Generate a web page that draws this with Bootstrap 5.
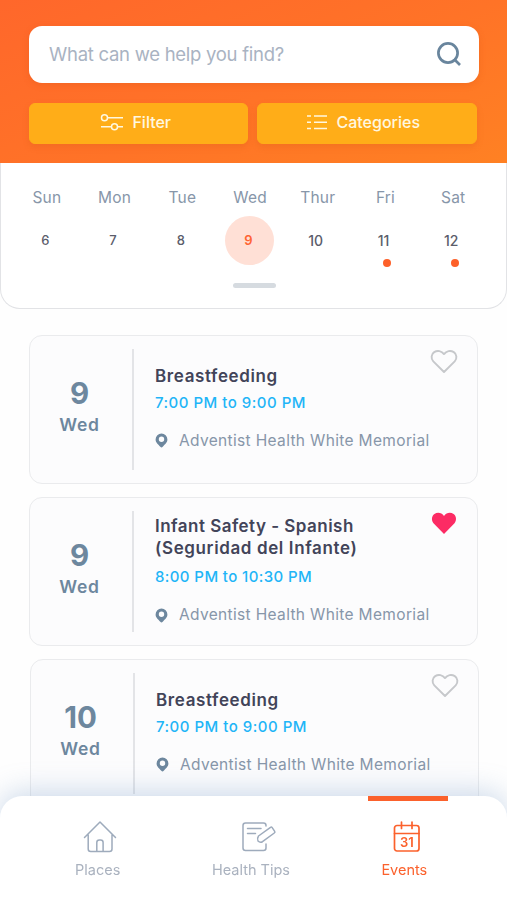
<!DOCTYPE html>
<html lang="en">
<head>
<meta charset="utf-8">
<meta name="viewport" content="width=device-width, initial-scale=1">
<title>Events</title>
<link href="https://cdn.jsdelivr.net/npm/bootstrap@5.3.0/dist/css/bootstrap.min.css" rel="stylesheet">
<style>
  body { font-family: Inter, "Open Sans", sans-serif; background: #fefefe; color: #45475b; height: 900px; overflow: hidden; }
  svg { display: block; flex: none; }
  .app-top { height: 163px; z-index: 1; padding: 26px 28px 0 29px; background: linear-gradient(158deg, #ff672b 0%, #ff7327 55%, #ff8123 100%); }
  .search-box { height: 57px; border-radius: 13px; padding: 0 17px 2px 20px; box-shadow: 0 2px 6px rgba(210,80,20,.25); }
  .search-text { font-size: 18.5px; line-height: 24px; color: #a9b3c2; letter-spacing: -.27px; }
  .top-actions { margin-top: 20px; gap: 9px; padding-right: 2px; }
  .btn-top { --bs-btn-color: #fff8e0; --bs-btn-bg: #ffad18; --bs-btn-border-color: #ffad18; --bs-btn-hover-bg: #f9a30c; --bs-btn-hover-color: #fff; height: 41px; border-radius: 6px; font-size: 16px; font-weight: 500; box-shadow: 0 3px 6px rgba(200,90,20,.22); }
  .btn-inner { padding: 0 6px 3px 0; }
  .btn-inner.wide { padding-right: 8px; }
  .week { height: 146px; border: 1px solid #e2e3e6; border-top: 0; border-radius: 0 0 20px 20px; background: #fff; padding: 24px 19px 0 12px; }
  .day-name { font-size: 15.5px; line-height: 22px; color: #8796a9; letter-spacing: .2px; }
  .day-num { width: 49px; height: 49px; margin-top: 7px; padding-right: 3px; font-size: 13px; font-weight: 500; color: #5b5d6b; }
  .day-num.two { font-size: 14px; padding-right: 4px; }
  .day-num.today { background: #ffe0d6; color: #ff6433; font-weight: 600; margin-left: -1px; padding-right: 2px; }
  .dot { width: 8px; height: 8px; margin: -6px 0 0 3px; background: #fd6029; }
  .handle { width: 43px; height: 5px; margin: -6px 0 0 220px; background: #d6dbe0; }
  .week .dayrow { height: 102px; }
  .events { padding: 26px 29px 0 29px; gap: 13px; }
  .event { height: 149px; border: 1.5px solid #eaebed; border-radius: 13px; background: #fcfcfd; padding: 13px 18px 13px 0; }
  .event.later { margin: 0 -1px 0 1px; }
  .date-col { width: 104px; flex: none; padding: 0 3px 7px 0; border-right: 2px solid #e3e4e7; color: #6d879e; }
  .date-num { font-size: 29.5px; line-height: 32px; font-weight: 700; }
  .date-day { font-size: 17.5px; line-height: 22px; margin-top: 5px; font-weight: 600; letter-spacing: .8px; }
  .info { padding: 0 0 3px 21px; }
  .title { font-size: 17px; line-height: 22px; font-weight: 600; color: #424459; letter-spacing: .62px; }
  .title .tight { letter-spacing: .47px; }
  .time { font-size: 15px; line-height: 20px; margin-top: 5.5px; font-weight: 500; color: #1fb5f7; letter-spacing: .5px; }
  .title.two-line + .time { margin-top: 8px; letter-spacing: .4px; }
  .place { font-size: 15.5px; line-height: 20px; margin-top: 18px; color: #8796a9; letter-spacing: .34px; }
  .place svg { margin-right: 11px; }
  .heart { margin: -1px 0 0 -2px; }
  .tabs { height: 104px; background: #fff; border-radius: 22px 22px 0 0; box-shadow: 0 -4px 28px rgba(120,155,200,.36); padding: 0 26px 0 21px; }
  .tab { color: #aab2bf; font-size: 14.5px; line-height: 20px; padding-top: 22px; }
  .tab span { margin-top: 4px; }
  .icon-home, .icon-events { margin-left: 5px; }
  .icon-tips { margin-left: 16px; }
  .tab.active { color: #fb612c; }
  .tab.active::before { content: ""; position: absolute; top: 0; left: 40px; width: 80px; height: 5px; background: #fb612c; }
</style>
</head>
<body>
<header class="app-top position-relative">
  <div class="search-box bg-white d-flex align-items-center justify-content-between">
    <span class="search-text">What can we help you find?</span>
    <svg width="26" height="26" viewBox="0 0 26 26" fill="none" stroke="#69859d" stroke-width="2.7"><circle cx="12" cy="12" r="9.6"/><path d="M18 18l6 6"/></svg>
  </div>
  <div class="top-actions d-flex">
    <button class="btn btn-top btn-inner w-50 d-flex align-items-center justify-content-center gap-2">
      <svg width="24" height="18" viewBox="0 0 24 18" fill="none" stroke="#fff8e0" stroke-width="1.5"><circle cx="4.500" cy="4.800" r="3"/><path d="M7.500 4.800H23M1 13.800h10.500M17.500 13.800H23"/><circle cx="14.500" cy="13.800" r="3"/></svg>
      <span>Filter</span>
    </button>
    <button class="btn btn-top btn-inner wide w-50 d-flex align-items-center justify-content-center gap-2">
      <svg width="22" height="18" viewBox="0 0 22 18" fill="none" stroke="#fff8e0" stroke-width="1.5"><path d="M1 3h4M8 3h13M1 9.300h4M8 9.300h13M1 15.500h4M8 15.500h13"/></svg>
      <span>Categories</span>
    </button>
  </div>
</header>

<section class="week">
  <div class="row g-0 dayrow text-center">
    <div class="col d-flex flex-column align-items-center"><span class="day-name">Sun</span><span class="day-num d-flex align-items-center justify-content-center">6</span></div>
    <div class="col d-flex flex-column align-items-center"><span class="day-name">Mon</span><span class="day-num d-flex align-items-center justify-content-center">7</span></div>
    <div class="col d-flex flex-column align-items-center"><span class="day-name">Tue</span><span class="day-num d-flex align-items-center justify-content-center">8</span></div>
    <div class="col d-flex flex-column align-items-center"><span class="day-name">Wed</span><span class="day-num today rounded-circle d-flex align-items-center justify-content-center">9</span></div>
    <div class="col d-flex flex-column align-items-center"><span class="day-name">Thur</span><span class="day-num two d-flex align-items-center justify-content-center">10</span></div>
    <div class="col d-flex flex-column align-items-center"><span class="day-name">Fri</span><span class="day-num two d-flex align-items-center justify-content-center">11</span><span class="dot rounded-circle"></span></div>
    <div class="col d-flex flex-column align-items-center"><span class="day-name">Sat</span><span class="day-num two d-flex align-items-center justify-content-center">12</span><span class="dot rounded-circle"></span></div>
  </div>
  <div class="handle rounded-pill"></div>
</section>

<main class="events d-flex flex-column">
  <article class="event d-flex flex-shrink-0">
    <div class="date-col d-flex flex-column align-items-center justify-content-center"><div class="date-num">9</div><div class="date-day">Wed</div></div>
    <div class="info flex-grow-1 d-flex flex-column justify-content-center">
      <div class="title">Breastfeeding</div>
      <div class="time">7:00 PM to 9:00 PM</div>
      <div class="place d-flex align-items-center text-nowrap"><svg width="13" height="15" viewBox="0 0 13 15"><path fill="#6d879e" fill-rule="evenodd" d="M6.500.5a5.900 5.900 0 0 1 5.900 5.900c0 3.300-2.700 4.800-4.700 7.400q-1.200 1.300-2.400 0C3.300 11.200.6 9.700.6 6.400A5.900 5.900 0 0 1 6.500.5zm0 3.100a2.700 2.700 0 1 0 0 5.400 2.700 2.700 0 0 0 0-5.400z"/></svg><span>Adventist Health White Memorial</span></div>
    </div>
    <svg class="heart" width="30" height="27" viewBox="0 0 30 27"><path fill="none" stroke="#c6c8cb" stroke-width="1.900" stroke-linejoin="round" d="M15 24L4.300 13.400C1.600 10.300 2.300 6 5.200 4.100 8.500 2 12.600 2.800 15 6.100c2.400-3.300 6.500-4.100 9.800-2 2.900 1.900 3.600 6.200.9 9.300z"/></svg>
  </article>
  <article class="event d-flex flex-shrink-0">
    <div class="date-col d-flex flex-column align-items-center justify-content-center"><div class="date-num">9</div><div class="date-day">Wed</div></div>
    <div class="info flex-grow-1 d-flex flex-column justify-content-center">
      <div class="title two-line"><span class="tight">Infant Safety - Spanish</span><br>(Seguridad del Infante)</div>
      <div class="time">8:00 PM to 10:30 PM</div>
      <div class="place d-flex align-items-center text-nowrap"><svg width="13" height="15" viewBox="0 0 13 15"><path fill="#6d879e" fill-rule="evenodd" d="M6.500.5a5.900 5.900 0 0 1 5.900 5.900c0 3.300-2.700 4.800-4.700 7.400q-1.200 1.300-2.400 0C3.300 11.200.6 9.700.6 6.400A5.900 5.900 0 0 1 6.500.5zm0 3.100a2.700 2.700 0 1 0 0 5.400 2.700 2.700 0 0 0 0-5.400z"/></svg><span>Adventist Health White Memorial</span></div>
    </div>
    <svg class="heart" width="30" height="27" viewBox="0 0 30 27"><path fill="#fc2b64" d="M15 24L4.500 13.200C2.100 10 2.700 5.900 5.400 4 8.600 1.900 12.600 2.600 15 5.900c2.400-3.300 6.400-4 9.600-1.900 2.700 1.900 3.300 6 .9 9.200z"/></svg>
  </article>
  <article class="event later d-flex flex-shrink-0">
    <div class="date-col d-flex flex-column align-items-center justify-content-center"><div class="date-num">10</div><div class="date-day">Wed</div></div>
    <div class="info flex-grow-1 d-flex flex-column justify-content-center">
      <div class="title">Breastfeeding</div>
      <div class="time">7:00 PM to 9:00 PM</div>
      <div class="place d-flex align-items-center text-nowrap"><svg width="13" height="15" viewBox="0 0 13 15"><path fill="#6d879e" fill-rule="evenodd" d="M6.500.5a5.900 5.900 0 0 1 5.900 5.900c0 3.300-2.700 4.800-4.700 7.400q-1.200 1.300-2.400 0C3.300 11.200.6 9.700.6 6.400A5.900 5.900 0 0 1 6.500.5zm0 3.100a2.700 2.700 0 1 0 0 5.400 2.700 2.700 0 0 0 0-5.400z"/></svg><span>Adventist Health White Memorial</span></div>
    </div>
    <svg class="heart" width="30" height="27" viewBox="0 0 30 27"><path fill="none" stroke="#c6c8cb" stroke-width="1.900" stroke-linejoin="round" d="M15 24L4.300 13.400C1.600 10.300 2.300 6 5.200 4.100 8.500 2 12.600 2.800 15 6.100c2.400-3.300 6.500-4.100 9.800-2 2.900 1.900 3.600 6.200.9 9.300z"/></svg>
  </article>
</main>

<nav class="tabs fixed-bottom row g-0">
  <div class="tab col d-flex flex-column align-items-center">
    <svg class="icon-home" width="36" height="38" viewBox="0 0 36 38" fill="none" stroke="#9eabbc" stroke-width="1.500" stroke-linecap="round" stroke-linejoin="round"><path d="M2.500 19.500L18 4l15.500 15.500M6.200 17v14q0 2.500 2.500 2.500h18.800q2.500 0 2.500-2.500V17M14.800 33v-8.500q0-2.500 2.500-2.500h1.300q2.500 0 2.500 2.500V33"/></svg>
    <span>Places</span>
  </div>
  <div class="tab col d-flex flex-column align-items-center">
    <svg class="icon-tips" width="36" height="38" viewBox="0 0 36 38" fill="none" stroke="#9eabbc" stroke-width="1.500" stroke-linecap="round" stroke-linejoin="round"><path d="M25 8V7.500Q25 5 22.500 5H4.500Q2 5 2 7.500v22.500q0 2.500 2.500 2.500h18q2.500 0 2.500-2.500v-4M6.500 10.500H20M6.500 15.500h8M17.500 18L29.500 9.300q1-.6 1.700.3l2.500 3.700q.6 1-.4 1.700L21.500 23.700q-2.500 1.200-4.500-.7-1-2.800.5-5z"/></svg>
    <span>Health Tips</span>
  </div>
  <div class="tab active position-relative col d-flex flex-column align-items-center">
    <svg class="icon-events" width="30" height="38" viewBox="0 0 30 38" fill="none" stroke="#fb612c" stroke-width="1.700" stroke-linecap="round"><rect x="2.500" y="7.500" width="24.500" height="25.500" rx="2.500"/><path d="M2.500 15.500h24.500M9.500 4v6.500M20 4v6.500"/><text x="14.800" y="28.600" text-anchor="middle" font-size="13" font-weight="600" fill="#fb612c" stroke="none">31</text></svg>
    <span>Events</span>
  </div>
</nav>
<script src="https://cdn.jsdelivr.net/npm/bootstrap@5.3.0/dist/js/bootstrap.bundle.min.js"></script>
</body>
</html>
